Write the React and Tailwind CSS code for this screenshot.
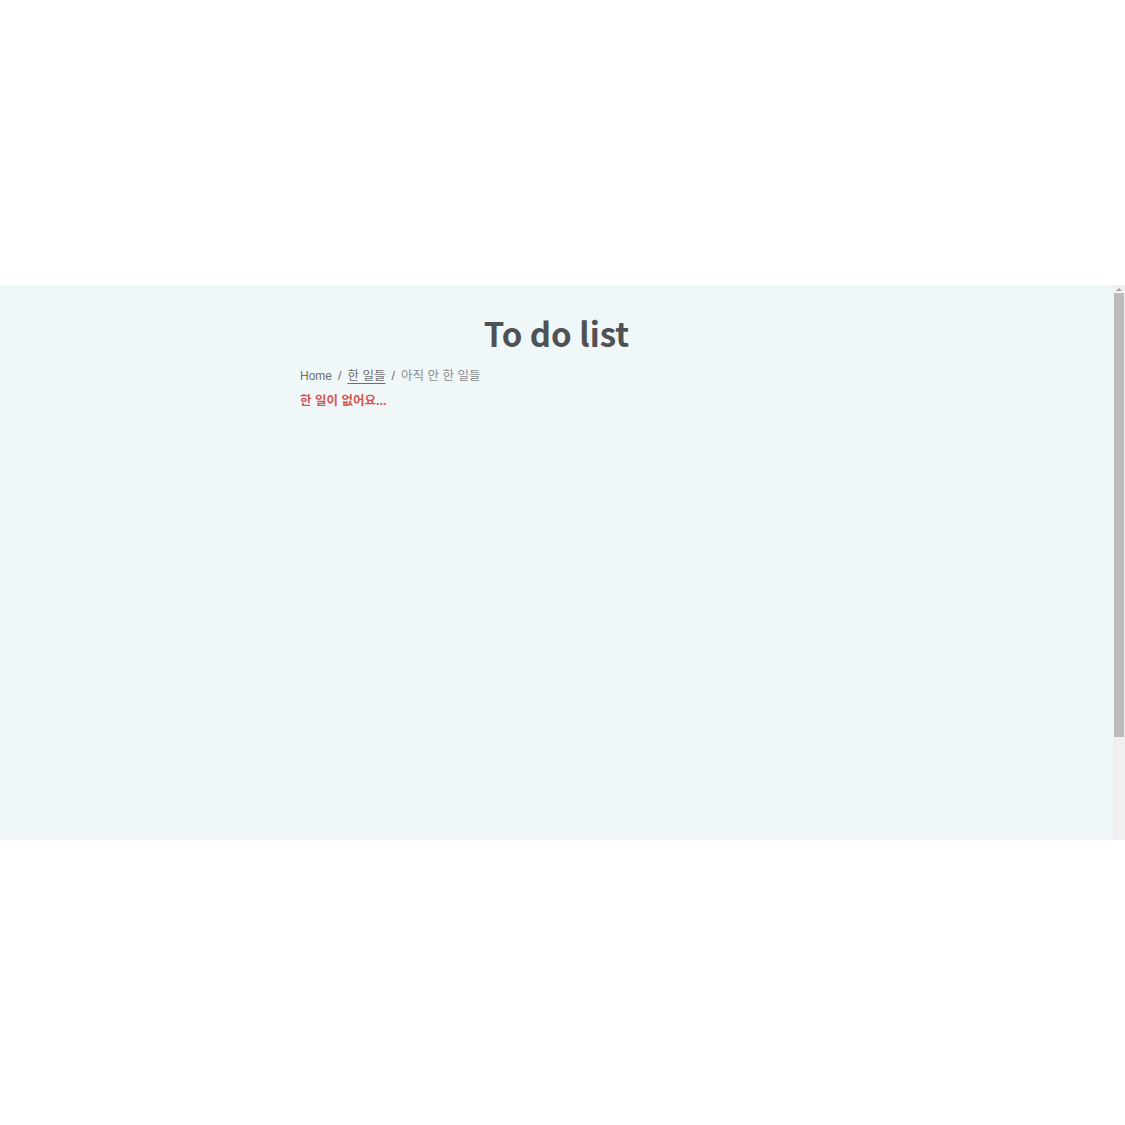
export default function App() {
  return (
    <div className="w-[1125px] h-[1125px] bg-white flex flex-col">
      <div className="h-[285px] shrink-0" />
      <div className="h-[555px] flex bg-[#eff7f9]">
        <div className="flex-1 flex flex-col items-center pt-[23px]">
          <h1
            className="text-[33px] font-bold text-[#4f5254] leading-[50px]"
            style={{ fontFamily: '"Noto Sans CJK KR", "Noto Sans", sans-serif' }}
          >
            To do list
          </h1>
          <div
            className="w-[513px] mt-[8px] text-[12.5px]"
            style={{ fontFamily: '"Liberation Sans", "Noto Sans CJK KR", sans-serif' }}
          >
            <div className="flex items-center gap-[6px] leading-[20px]">
              <span className="text-[#6b6e70] text-[12px]">Home</span>
              <span className="text-[#6b6e70]">/</span>
              <span className="underline underline-offset-[3px] text-[#6b6e70]">한 일들</span>
              <span className="text-[#6b6e70]">/</span>
              <span className="text-[#8a8c8e]">아직 안 한 일들</span>
            </div>
            <div className="mt-[5px] text-[#d9534f] font-bold leading-[20px]">한 일이 없어요...</div>
          </div>
        </div>
        <div className="w-[12px] bg-[#f0f0f0] flex flex-col items-center">
          <div className="h-[8px] flex items-center justify-center">
            <div className="w-0 h-0 border-l-[3px] border-r-[3px] border-b-[3px] border-l-transparent border-r-transparent border-b-[#a3a3a3]" />
          </div>
          <div className="w-[10px] h-[444px] bg-[#bcbcbc]" />
        </div>
      </div>
    </div>
  );
}
